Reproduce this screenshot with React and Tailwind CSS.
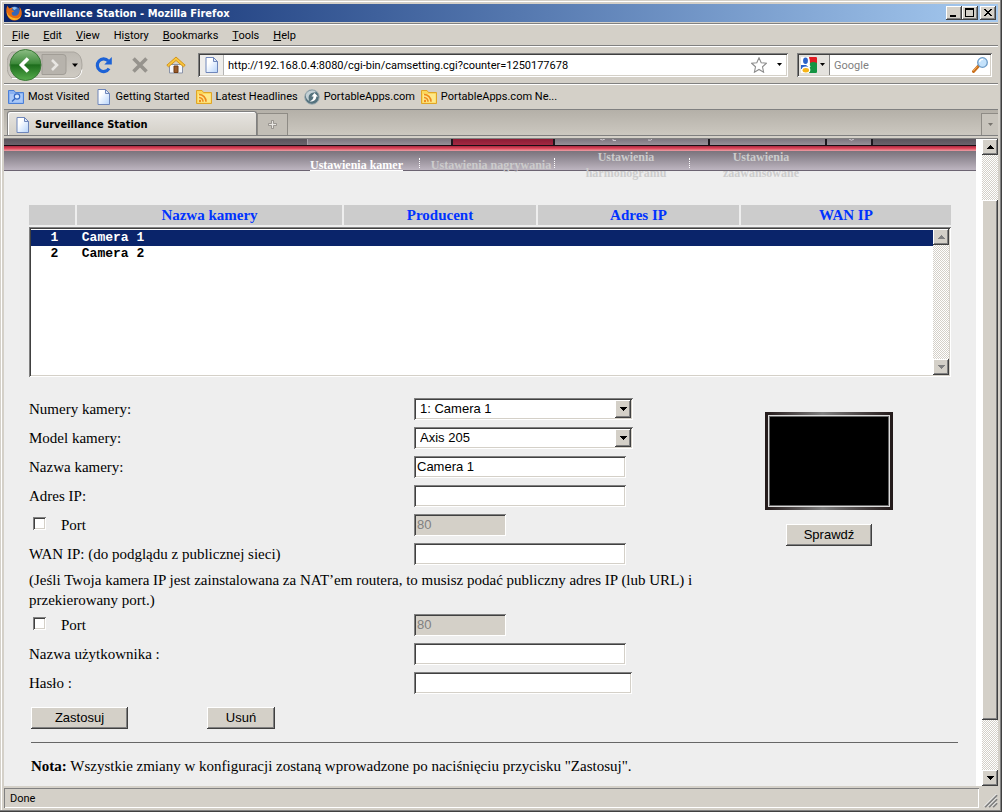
import { useState } from "react";
import clsx from "clsx";

/**
 * Surveillance Station camera settings, shown inside a classic Firefox window.
 * The browser chrome is a column of bars; the page area takes what is left.
 */

const RAISED = "bg-[#d4d0c8] shadow-[inset_-1px_-1px_0_#404040,inset_1px_1px_0_#fff,inset_-2px_-2px_0_#808080]";
const SUNKEN = "shadow-[inset_1px_1px_0_#808080,inset_-1px_-1px_0_#fff,inset_2px_2px_0_#404040,inset_-2px_-2px_0_#d4d0c8]";
const DITHER = "bg-[repeating-conic-gradient(#fff_0_25%,#d4d0c8_0_50%)] bg-[length:2px_2px]";
const CAPTION = "font-['DejaVu_Sans_Condensed','DejaVu_Sans',sans-serif] text-[11px] font-bold";

const MENU = [
  ["", "F", "ile"],
  ["", "E", "dit"],
  ["", "V", "iew"],
  ["Hi", "s", "tory"],
  ["", "B", "ookmarks"],
  ["", "T", "ools"],
  ["", "H", "elp"],
];

const BOOKMARKS = [
  { label: "Most Visited", icon: SmartFolder },
  { label: "Getting Started", icon: Page },
  { label: "Latest Headlines", icon: Feed },
  { label: "PortableApps.com", icon: Portable },
  { label: "PortableApps.com Ne...", icon: Feed },
];

const CAMERAS = ["Camera 1", "Camera 2"];

/* ---------- icons ---------- */

function Firefox() {
  return (
    <svg viewBox="0 0 16 16" className="size-4 shrink-0" aria-hidden>
      <circle cx="8.5" cy="7.5" r="6" fill="#3566b8" />
      <path d="M6 2.500c2-1 4-.6 5.500.8-1.500 0-2 .7-2.500 1.700-1-.2-2.500-.8-3-2.500z" fill="#8fc0ee" />
      <path d="M1.500.5C0 3.500-.3 7.500 1.500 11c1.500 3 4.300 4.700 7.500 4.500 4-.3 6.800-3.500 6.800-7.500 0-2.500-1-4.800-2.600-6.200.7 1.700.7 3.200.2 4.700-.3 2.700-2.200 4.500-4.400 4.300-2-.1-3.300-1.100-3.300-2.400 0-1 .8-1.500 2.200-1.200C7.800 5.500 6.500 5 5.500 5.300c.1-.9.600-1.600 1.600-2.200C5.800 2.500 4.500 2.800 3.700 3.500 2.800 2.800 1.800 2 1.500.5z" fill="#e66a10" />
      <path d="M.8 7c.2 3.800 2.500 7.200 6.700 8 3.500.6 6.400-1.300 7.500-4.200-1.600 1.900-3.500 2.700-5.500 2.500C5.500 13 2.500 11 .8 7z" fill="#f9b72e" />
    </svg>
  );
}

function Page() {
  return (
    <svg viewBox="0 0 16 16" className="size-4 shrink-0" aria-hidden>
      <defs>
        <linearGradient id="pg" x1="0" y1="0" x2="1" y2="1">
          <stop offset="0.3" stopColor="#fff" />
          <stop offset="1" stopColor="#b5d3fb" />
        </linearGradient>
      </defs>
      <path d="M2 .5h7.500l4 4v11H2z" fill="url(#pg)" stroke="#6f86ba" />
      <path d="M9.500.5v4h4z" fill="#dfeafc" stroke="#6f86ba" />
    </svg>
  );
}

function SmartFolder() {
  return (
    <svg viewBox="0 0 16 16" className="size-4 shrink-0" aria-hidden>
      <path d="M.5 1.500h5.500l1.500 2h8v11H.5z" fill="#8bb2f1" stroke="#4b7fd6" />
      <path d="M2 5h12.500v8.500H2z" fill="#a9c8f8" />
      <circle cx="9" cy="7.500" r="2.700" fill="#d8e8ff" stroke="#3468c4" strokeWidth="1.200" />
      <path d="M7 9.500L4 12.500" stroke="#3468c4" strokeWidth="1.500" />
    </svg>
  );
}

function Feed() {
  return (
    <svg viewBox="0 0 16 16" className="size-4 shrink-0" aria-hidden>
      <path d="M.5 1.500h5.500l1.500 2h8v11H.5z" fill="#fbd85d" stroke="#e0a526" />
      <path d="M2 5h12.500v8.500H2z" fill="#fde88a" />
      <g fill="none" stroke="#ee8a1d" strokeWidth="1.600">
        <path d="M3 8.500a4 4 0 0 1 4 4.300" />
        <path d="M3 5.500a7 7 0 0 1 7 7.300" />
      </g>
      <circle cx="4" cy="12" r="1.200" fill="#ee8a1d" />
    </svg>
  );
}

function Portable() {
  return (
    <svg viewBox="0 0 16 16" className="size-4 shrink-0" aria-hidden>
      <circle cx="8" cy="8" r="7.300" fill="#54727d" stroke="#a2afb4" />
      <path d="M2.500 4a6.800 6.800 0 0 1 10-.8c-3-.2-6.500.8-7.500 3.300-.7 1.900-.5 3.500.3 5.500C2 10.500 1 7 2.500 4z" fill="#c3d0d5" />
      <path d="M5.500 12.500c4.500.2 6.500-1.500 6.800-5h1.700L10.500 4 7.500 7.500h2c0 2.200-1.300 4-4 5z" fill="#fff" />
    </svg>
  );
}

function Reload() {
  return (
    <svg viewBox="0 0 18 18" className="size-[18px]" aria-hidden>
      <path d="M14 12.500A6.300 6.300 0 1 1 13.300 5" fill="none" stroke="#1c62d6" strokeWidth="3.200" />
      <path d="M16.800 1v7.500H9.300z" fill="#1c62d6" />
    </svg>
  );
}

function Stop() {
  return (
    <svg viewBox="0 0 18 18" className="size-[18px]" aria-hidden>
      <path d="M2.500 2.500l13 13M15.500 2.500l-13 13" stroke="#96938d" strokeWidth="3.600" />
    </svg>
  );
}

function Home() {
  return (
    <svg viewBox="0 0 20 18" className="h-[18px] w-5" aria-hidden>
      <path d="M3.500 8.500h13v8.500h-13z" fill="#f4f6fb" stroke="#8a93a8" />
      <path d="M8 10h4v6.500H8z" fill="#9a5a2a" stroke="#6e3c14" />
      <path d="M10 1L.8 9.200l1.700 1.600L10 4.500l7.500 6.300 1.700-1.600z" fill="#f8c63c" stroke="#d18d10" strokeWidth=".9" />
    </svg>
  );
}

function BackForward() {
  return (
    <svg viewBox="0 0 76 34" className="h-[34px] w-[76px]" aria-hidden>
      <defs>
        <linearGradient id="back" x1="0" y1="0" x2="0" y2="1">
          <stop offset="0" stopColor="#8dbd85" />
          <stop offset=".45" stopColor="#3f8b3c" />
          <stop offset=".5" stopColor="#1d6d1c" />
          <stop offset="1" stopColor="#57ad4d" />
        </linearGradient>
        <linearGradient id="pill" x1="0" y1="0" x2="0" y2="1">
          <stop offset="0" stopColor="#bdb9b2" />
          <stop offset="1" stopColor="#cfcbc3" />
        </linearGradient>
      </defs>
      <path d="M5 4h62q8 2 8 13t-8 13H5Q0 27 0 17T5 4z" fill="url(#pill)" stroke="#aaa69f" />
      <path d="M5 30.500h62q7-1 8-9" fill="none" stroke="#fff" />
      <path d="M35 6.500h21q3 0 3 3v14q0 3-3 3H35z" fill="#b7b3ac" stroke="#a19d96" />
      <path d="M45 12l5 5-5 5" fill="none" stroke="#e8e6e2" strokeWidth="2.600" />
      <circle cx="18.500" cy="17" r="15.500" fill="url(#back)" stroke="#3c7a38" />
      <path d="M21 10.500L14.500 17l6.500 6.500" fill="none" stroke="#fff" strokeWidth="3.600" />
      <path d="M65 15.500h6l-3 3.500z" fill="#000" />
    </svg>
  );
}

function Star() {
  return (
    <svg viewBox="0 0 16 16" className="size-4" aria-hidden>
      <path d="M8 .8l2.200 4.900 5.200.5-3.900 3.600 1.100 5.400L8 12.500l-4.600 2.700 1.100-5.400L.6 6.200l5.200-.5z" fill="#fff" stroke="#8c8c8c" strokeWidth="1.100" />
    </svg>
  );
}

function Google() {
  return (
    <svg viewBox="0 0 16 16" className="size-4" aria-hidden>
      <path d="M0 0h16v16H0z" fill="#fff" />
      <path d="M8 0h7q1 0 1 1v5H9z" fill="#e11b22" />
      <path d="M9 6q3-2 7 0v9q0 1-1 1H8z" fill="#149443" />
      <path d="M0 8h5l3 2-2 2H0z" fill="#2a62c9" />
      <ellipse cx="5" cy="4" rx="3.600" ry="4" fill="#fff" />
      <ellipse cx="4.500" cy="3.700" rx="2.400" ry="3.200" fill="#2a62c9" />
      <ellipse cx="5" cy="13" rx="4.400" ry="3.400" fill="#fff" />
      <ellipse cx="4.800" cy="13.300" rx="3.200" ry="2.200" fill="#f6b417" />
      <path d="M6 7l3 3" stroke="#fff" strokeWidth="2" />
    </svg>
  );
}

function Magnifier() {
  return (
    <svg viewBox="0 0 16 16" className="size-4" aria-hidden>
      <path d="M1.500 14.500l5-5.500" stroke="#c96f1b" strokeWidth="3" strokeLinecap="round" />
      <path d="M1.200 14l4-4.500" stroke="#f3ab5c" strokeWidth="1" />
      <circle cx="10.500" cy="5.500" r="4.800" fill="#c4e2fb" stroke="#6d9cc8" strokeWidth="1.300" />
      <path d="M7.500 5a3.200 3.200 0 0 1 3.500-2.500" stroke="#fff" strokeWidth="1.300" fill="none" />
    </svg>
  );
}

function Arrow({ up, muted }) {
  return (
    <svg viewBox="0 0 7 4" className="h-1 w-[7px]" shapeRendering="crispEdges" aria-hidden>
      <path d={up ? "M0 4h7L3.500 0z" : "M0 0h7L3.500 4z"} fill={muted ? "#808080" : "#000"} />
    </svg>
  );
}

/* ---------- small parts ---------- */

function ScrollButton({ up, muted }) {
  return (
    <button
      aria-label={up ? "Scroll up" : "Scroll down"}
      className={clsx("flex size-4 shrink-0 items-center justify-center", RAISED)}
    >
      <Arrow up={up} muted={muted} />
    </button>
  );
}

function CaptionButton({ label, children }) {
  return (
    <button aria-label={label} className={clsx("h-3.5 w-4", RAISED)}>
      <svg viewBox="0 0 16 14" className="h-3.5 w-4" shapeRendering="crispEdges" aria-hidden>
        {children}
      </svg>
    </button>
  );
}

function FormRow({ label, id, children }) {
  return (
    <div className="flex h-[29px] items-center">
      <label htmlFor={id} className="w-[385px] shrink-0">{label}</label>
      {children}
    </div>
  );
}

function TextField({ id, width = "w-[212px]", ...rest }) {
  return (
    <input
      id={id}
      className={clsx("h-[22px] bg-white px-[3px] font-['Liberation_Sans',sans-serif] text-[13px] outline-none disabled:bg-[#d4d0c8] disabled:text-[#808080]", SUNKEN, width)}
      {...rest}
    />
  );
}

function SelectField({ id, options }) {
  return (
    <div className="relative w-[219px]">
      <select
        id={id}
        className={clsx("block h-[22px] w-full appearance-none bg-white px-1.5 font-['Liberation_Sans',sans-serif] text-[13px] outline-none", SUNKEN)}
      >
        {options.map((o) => <option key={o}>{o}</option>)}
      </select>
      <span className={clsx("pointer-events-none absolute top-0.5 right-0.5 flex h-[18px] w-4 items-center justify-center", RAISED)}>
        <Arrow />
      </span>
    </div>
  );
}

function PortRow({ id }) {
  return (
    <div className="flex h-[29px] items-center">
      <div className="flex w-[385px] shrink-0 items-center gap-[15px] pl-1">
        <input type="checkbox" id={id} className={clsx("mb-0.5 size-[13px] appearance-none bg-white", SUNKEN)} />
        <label htmlFor={id}>Port</label>
      </div>
      <TextField width="w-[92px]" defaultValue="80" aria-label="Port" disabled />
    </div>
  );
}

function PushButton({ width, children }) {
  return (
    <button className={clsx("h-[22px] font-['Liberation_Sans',sans-serif] text-[13px] leading-[22px]", RAISED, width)}>
      {children}
    </button>
  );
}

/* ---------- browser chrome ---------- */

function TitleBar() {
  return (
    <div className="flex h-[18px] items-center bg-linear-to-r from-[#0a246a] to-[#a6caf0] pr-0.5 pl-0.5 text-white">
      <Firefox />
      <span className={clsx("ml-0.5 flex-1 pt-0.5", CAPTION)}>Surveillance Station - Mozilla Firefox</span>
      <CaptionButton label="Minimize"><path d="M4 9h6v2H4z" /></CaptionButton>
      <CaptionButton label="Maximize">
        <path d="M3 2h9v9H3zM4 4v6h7V4z" fillRule="evenodd" />
      </CaptionButton>
      <span className="w-0.5" />
      <CaptionButton label="Close">
        <path d="M4 3h2v1h1v1h2V4h1V3h2v1h-1v1h-1v1H9v1h1v1h1v1h1v1h-2V9H9V8H7v1H6v1H4V9h1V8h1V7h1V6H6V5H5V4H4z" />
      </CaptionButton>
    </div>
  );
}

function MenuBar() {
  return (
    <nav className="mt-px flex h-[23px] items-center gap-3.5 border-y border-t-[#808080] border-b-[#808080] pt-0.5 pl-2 shadow-[inset_0_1px_0_#fff]">
      {MENU.map(([pre, key, post]) => (
        <button key={pre + key + post}>
          {pre}<span className="underline">{key}</span>{post}
        </button>
      ))}
    </nav>
  );
}

function NavBar() {
  return (
    <div className="flex h-[38px] items-center border-b border-[#808080] pr-1.5 pl-[3px] shadow-[inset_0_1px_0_#fff]">
      <button aria-label="Back and forward"><BackForward /></button>
      <button aria-label="Reload" className="ml-3"><Reload /></button>
      <button aria-label="Stop" className="ml-[18px]"><Stop /></button>
      <button aria-label="Home" className="ml-[17px]"><Home /></button>
      <div className={clsx("ml-3 flex h-6 flex-1 items-center bg-white p-0.5", SUNKEN)}>
        <span className="flex h-5 w-6 items-center justify-center border-r border-[#b5b5b5] bg-[#eeedeb]"><Page /></span>
        <input
          aria-label="Address"
          className="min-w-0 flex-1 pt-0.5 pl-1 outline-none"
          defaultValue="http://192.168.0.4:8080/cgi-bin/camsetting.cgi?counter=1250177678"
        />
        <button aria-label="Bookmark this page"><Star /></button>
        <button aria-label="Show history" className="flex w-[15px] items-center justify-end">
          <svg viewBox="0 0 5 3" className="h-[3px] w-[5px]" aria-hidden><path d="M0 0h5L2.500 3z" /></svg>
        </button>
        <span className="w-1" />
      </div>
      <div className={clsx("ml-[9px] flex h-6 w-[195px] items-center bg-white p-0.5", SUNKEN)}>
        <button aria-label="Search engine" className="flex h-5 w-[31px] items-center justify-between border-r border-[#808080] bg-[#e4e2de] pr-1 pl-0.5">
          <Google />
          <svg viewBox="0 0 5 3" className="h-[3px] w-[5px]" aria-hidden><path d="M0 0h5L2.500 3z" /></svg>
        </button>
        <input aria-label="Search" placeholder="Google" className="min-w-0 flex-1 pt-0.5 pl-1 outline-none placeholder:text-[#808080]" />
        <button aria-label="Go" className="pr-0.5"><Magnifier /></button>
      </div>
    </div>
  );
}

function BookmarksBar() {
  return (
    <div className="flex h-[26px] items-center gap-1.5 border-b border-[#808080] pt-px pl-1 shadow-[inset_0_1px_0_#fff]">
      {BOOKMARKS.map(({ label, icon: Icon }) => (
        <a key={label} href="#" className="flex items-center gap-1 whitespace-nowrap"><Icon />{label}</a>
      ))}
    </div>
  );
}

function TabBar() {
  return (
    <div className="flex h-[26px] items-end border-b border-[#808080] bg-linear-to-b from-[#b4b0a8] to-[#ccc8c0] pl-[3px]">
      <div className="flex h-6 w-[250px] items-center gap-1 rounded-t-[3px] border border-b-0 border-[#808080] bg-linear-to-b from-[#e6e4e0] to-[#d4d0c8] pt-0.5 pl-[7px] shadow-[inset_1px_1px_0_#fff]">
        <Page />
        <span className={CAPTION}>Surveillance Station</span>
      </div>
      <button aria-label="New tab" className="flex h-[22px] w-[31px] items-center justify-center border border-b-0 border-[#8e8b85] bg-[#c2beb6]">
        <svg viewBox="0 0 9 9" className="size-[9px]" aria-hidden>
          <path d="M3.500.5h2v3h3v2h-3v3h-2v-3h-3v-2h3z" fill="#e8e6e2" stroke="#8a8782" strokeWidth=".8" />
        </svg>
      </button>
      <span className="flex-1" />
      <button aria-label="List all tabs" className="flex h-[22px] w-[17px] items-center justify-center border border-r-0 border-b-0 border-[#8e8b85] bg-[#c8c4bc]">
        <svg viewBox="0 0 5 3" className="h-[3px] w-[5px]" aria-hidden><path d="M0 0h5L2.500 3z" fill="#77746e" /></svg>
      </button>
    </div>
  );
}

/* ---------- page ---------- */

function Divider() {
  return <span className="-mt-1 h-2.5 border-l border-dotted border-white" />;
}

function PageHeader() {
  const tab = "border-r-2 border-[#1c181e] bg-linear-to-b from-[#7d767f] to-[#989199]";
  return (
    <header>
      <div className="flex h-[7px] border-b border-[#1a0d14] bg-linear-to-b from-[#5a545c] to-[#6a636c] pl-[303px]">
        <span className={clsx("w-[146px] border-l border-l-[#a8a2aa]", tab)} />
        <span className="w-[102px] border-r-2 border-[#1c181e] bg-linear-to-b from-[#8a1c34] to-[#a32842]" />
        <span className={clsx("w-[155px]", tab)}>
          <svg viewBox="0 0 155 6" className="h-1.5 w-[155px]" aria-hidden>
            <path d="M45 0q2 2 5 0M58 0v1.500h3M97 0q-1 2-4 1" fill="none" stroke="#d0ccd2" />
          </svg>
        </span>
        <span className={clsx("w-[117px]", tab)} />
        <span className={clsx("w-[46px]", tab)}>
          <svg viewBox="0 0 46 6" className="h-1.5 w-[46px]" aria-hidden>
            <path d="M22 0q2.500 2.500 5 0" fill="none" stroke="#d0ccd2" />
          </svg>
        </span>
      </div>
      <div className="h-[5px] bg-linear-to-b from-[#a8283f] via-[#e04a5e] to-[#e8a0a8]" />
      <nav className="flex h-5 items-center border-b border-[#6c6472] bg-linear-to-b from-[#7a737c] to-[#bdb5c0] pt-2 pl-[290px] text-center text-[12px] leading-4 font-bold text-[#ccc]">
        <a href="#" className="w-[125px] text-white underline">Ustawienia kamer</a>
        <Divider />
        <a href="#" className="w-[134px] pl-2 whitespace-nowrap">Ustawienia nagrywania</a>
        <Divider />
        <a href="#" className="w-[134px] pr-4 pl-6">Ustawienia harmonogramu</a>
        <Divider />
        <a href="#" className="w-[134px] pr-4 pl-6">Ustawienia zaawansowane</a>
      </nav>
    </header>
  );
}

function CameraList() {
  const [selected, setSelected] = useState("0");
  return (
    <>
      <table className="w-full table-fixed border-separate border-spacing-0 text-[15px] leading-5 text-[#0033ff]">
        <thead>
          <tr className="*:border-r-2 *:border-[#eee] *:bg-[#ccc] *:bg-clip-padding *:p-0">
            <td className="h-5 w-12" />
            <th className="w-[267px]">Nazwa kamery</th>
            <th className="w-[194px]">Producent</th>
            <th className="w-[203px]">Adres IP</th>
            <th className="border-r-0!">WAN IP</th>
          </tr>
        </thead>
      </table>
      <div className={clsx("mt-0.5 flex h-[150px] bg-white p-0.5", SUNKEN)}>
        <select
          size={9}
          value={selected}
          onChange={(e) => setSelected(e.target.value)}
          aria-label="Lista kamer"
          className="h-full flex-1 [appearance:none] overflow-hidden pt-px font-['Liberation_Mono',monospace] text-[13px] outline-none"
        >
          {CAMERAS.map((name, i) => (
            <option
              key={name}
              value={String(i)}
              className="h-4 p-0 pl-1 leading-4 font-bold checked:bg-[linear-gradient(#0a246a,#0a246a)] checked:[-webkit-text-fill-color:white]"
            >
              {`\u00a0\u00a0${i + 1}\u00a0\u00a0\u00a0${name}`}
            </option>
          ))}
        </select>
        <div className={clsx("flex w-4 flex-col justify-between", DITHER)}>
          <ScrollButton up muted />
          <ScrollButton muted />
        </div>
      </div>
    </>
  );
}

function CameraForm() {
  return (
    <div className="mt-[17px] flex text-[15px] leading-5">
      <div className="flex-1">
        <FormRow label="Numery kamery:" id="number">
          <SelectField id="number" options={["1: Camera 1", "2: Camera 2"]} />
        </FormRow>
        <FormRow label="Model kamery:" id="model">
          <SelectField id="model" options={["Axis 205"]} />
        </FormRow>
        <FormRow label="Nazwa kamery:" id="name"><TextField id="name" defaultValue="Camera 1" /></FormRow>
        <FormRow label="Adres IP:" id="ip"><TextField id="ip" /></FormRow>
        <PortRow id="port" />
        <FormRow label="WAN IP: (do podglądu z publicznej sieci)" id="wan"><TextField id="wan" /></FormRow>
        <p className="mt-0.5">
          (Jeśli Twoja kamera IP jest zainstalowana za NAT’em routera, to musisz podać publiczny adres IP (lub URL) i
          przekierowany port.)
        </p>
        <PortRow id="wan-port" />
        <FormRow label="Nazwa użytkownika :" id="user"><TextField id="user" /></FormRow>
        <FormRow label="Hasło :" id="password">
          <TextField id="password" type="password" width="w-[218px]" />
        </FormRow>
      </div>
      <div className="flex w-[244px] flex-col items-center gap-3.5 pt-[18px]">
        {/* preview frame: dark bezel with a thin light line inside */}
        <div className="h-[98px] w-32 bg-linear-to-r from-[#231a1a] via-[#808080] via-45% to-[#231a1a] px-[3px] py-[3px]">
          <div className="h-full border border-[#ddd] bg-black shadow-[inset_0_0_0_1px_#666]" />
        </div>
        <PushButton width="w-[86px]">Sprawdź</PushButton>
      </div>
    </div>
  );
}

function PageScrollbar() {
  return (
    <div className={clsx("flex w-4 flex-col", DITHER)}>
      <ScrollButton up />
      <span className="grow-[45]" />
      <span className={clsx("grow-[520]", RAISED)} />
      <span className="grow-[50]" />
      <ScrollButton />
    </div>
  );
}

function StatusBar() {
  return (
    <footer className="flex h-[22px] items-center pt-0.5">
      <span className="flex h-5 flex-1 items-center pt-0.5 pl-1.5 shadow-[inset_1px_1px_0_#808080,inset_-1px_-1px_0_#fff]">Done</span>
      <svg viewBox="0 0 19 20" className="h-5 w-[19px]" aria-hidden>
        <path d="M6 19L18 7M10 19l8-8M14 19l4-4" stroke="#808080" strokeWidth="2" />
        <path d="M5 18.500L17.500 6M9 18.500L17.500 10M13 18.500l4.500-4.500" stroke="#fff" />
      </svg>
    </footer>
  );
}

export default function App() {
  return (
    <div className="flex min-h-screen flex-col bg-[#d4d0c8] p-1 font-[Roboto,sans-serif] text-[11px] leading-4 text-black shadow-[inset_-1px_-1px_0_#404040,inset_-2px_-2px_0_#808080,inset_1px_1px_0_#d4d0c8,inset_2px_2px_0_#fff]">
      <TitleBar />
      <MenuBar />
      <NavBar />
      <BookmarksBar />
      <TabBar />

      <div className="mt-0.5 flex flex-1 border-t border-[#808080] bg-white">
        <main className="flex-1 bg-[#eee] font-['Liberation_Serif',serif]">
          <PageHeader />
          <div className="pt-[34px] pr-[25px] pl-[25px]">
            <CameraList />
            <CameraForm />
            <div className="mt-2.5 flex gap-[79px] pl-0.5">
              <PushButton width="w-[97px]">Zastosuj</PushButton>
              <PushButton width="w-[68px]">Usuń</PushButton>
            </div>
          </div>
          <hr className="mt-[13px] mr-[18px] ml-[27px] border-[#666]" />
          <p className="mt-[13px] pl-[27px] text-[15px] leading-5">
            <b>Nota:</b> Wszystkie zmiany w konfiguracji zostaną wprowadzone po naciśnięciu przycisku "Zastosuj".
          </p>
        </main>
        <span className="w-1.5" />
        <PageScrollbar />
      </div>

      <StatusBar />
    </div>
  );
}
